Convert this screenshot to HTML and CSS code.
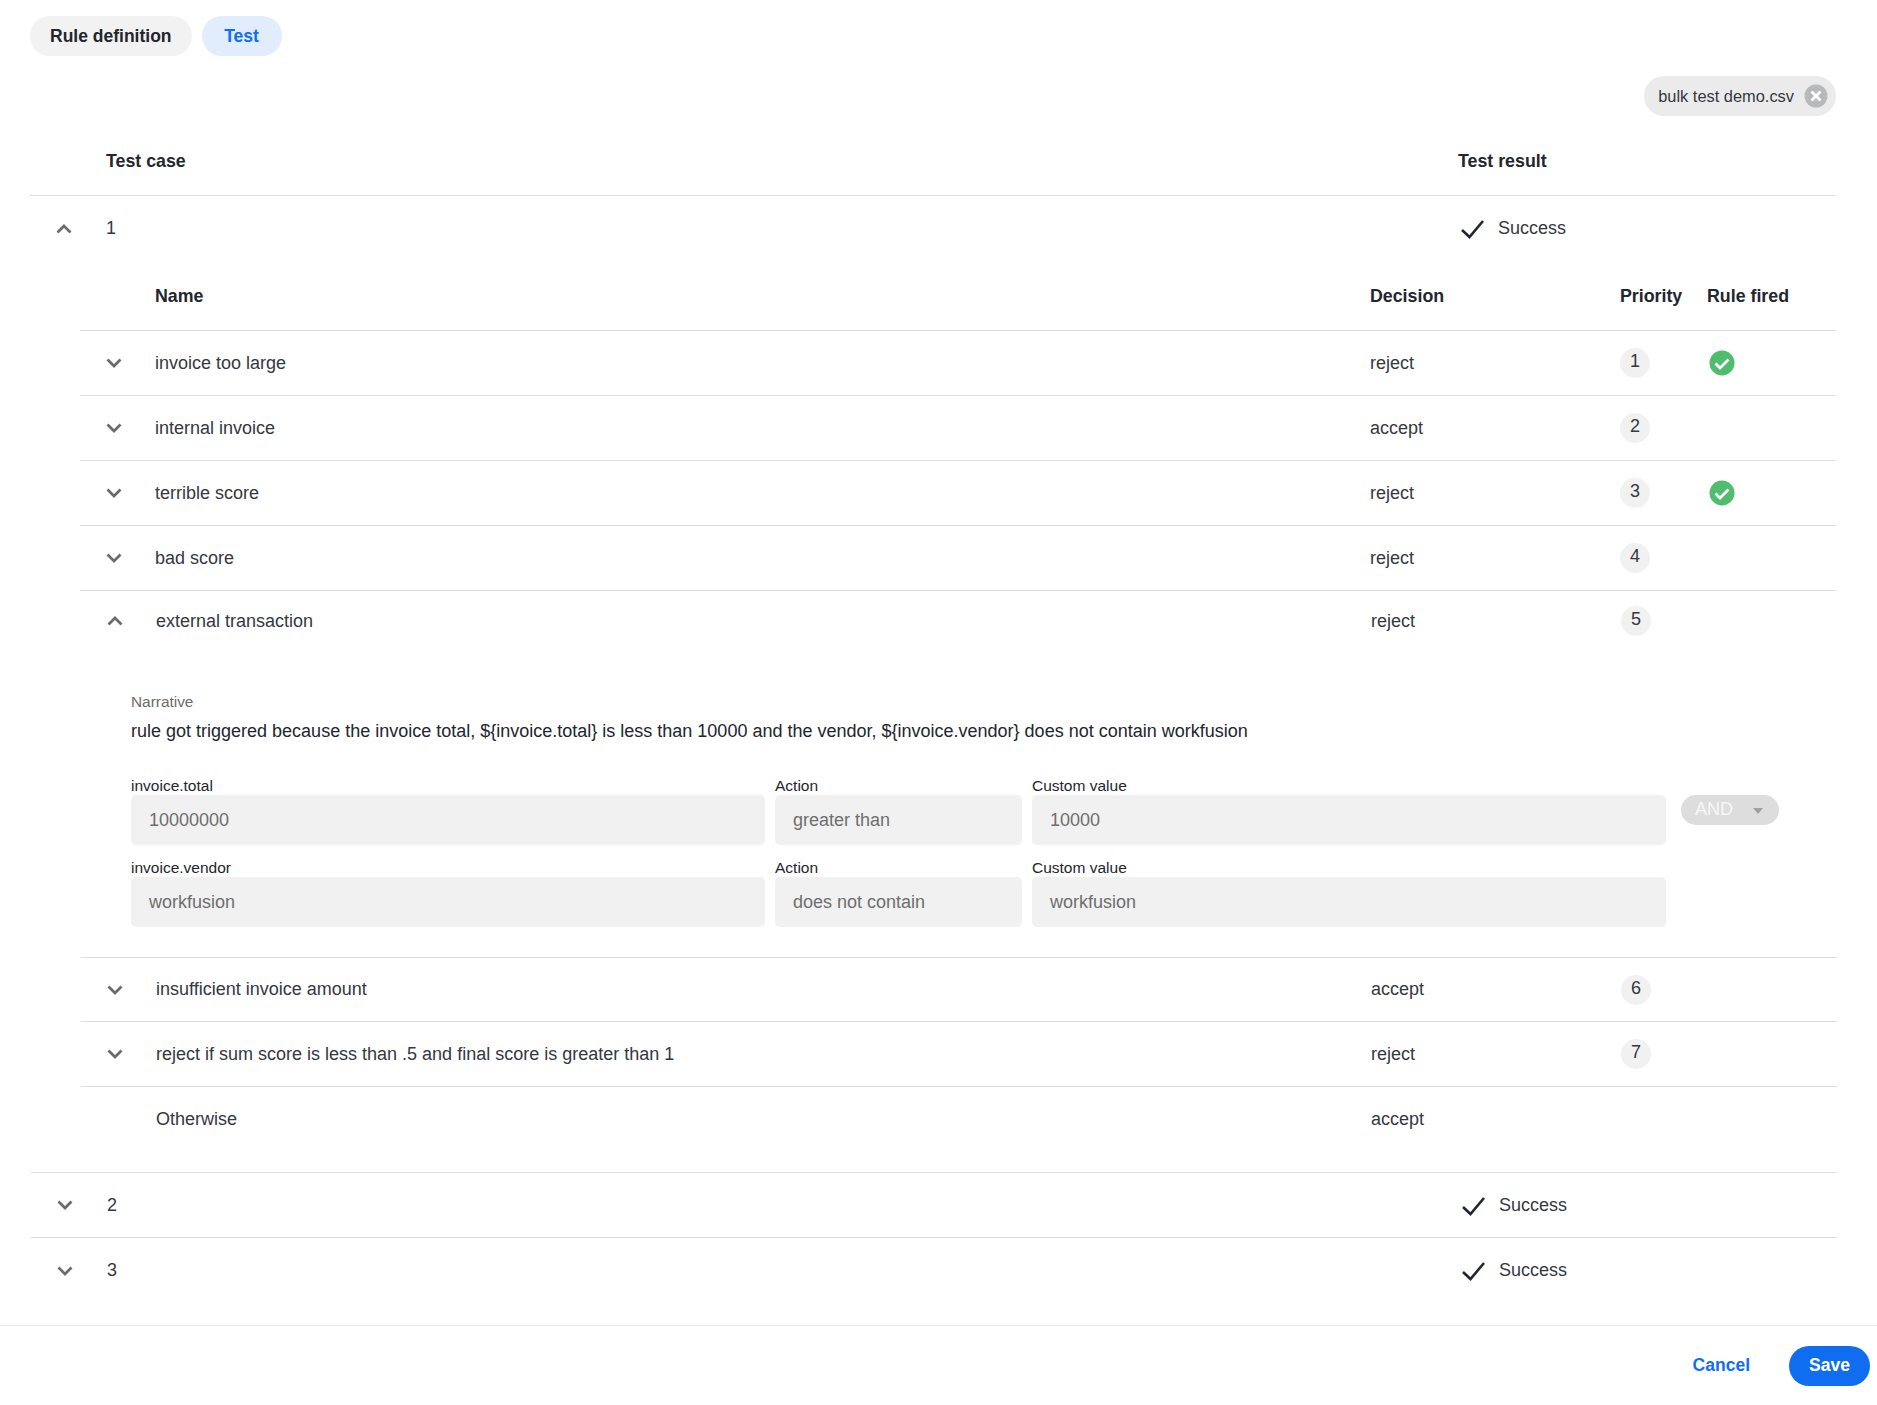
FILE: index.html
```html
<!DOCTYPE html>
<html lang="en">
<head>
    <meta charset="UTF-8">
    <meta name="viewport" content="width=device-width, initial-scale=1.0">
    <title>Rule test</title>
    <link rel="stylesheet" href="styles.css">
</head>
<body>
    <svg class="icon-defs" width="0" height="0">
        <symbol id="chevron-down" viewBox="0 0 16 10"><path d="M1.5 1.5 8 8l6.5-6.5" fill="none" stroke="currentColor" stroke-width="2.7"/></symbol>
        <symbol id="chevron-up" viewBox="0 0 16 10"><path d="M1.5 8.5 8 2l6.5 6.5" fill="none" stroke="currentColor" stroke-width="2.7"/></symbol>
        <symbol id="tick" viewBox="0 0 24 20"><path d="M2 11l7.5 7L23 2" fill="none" stroke="currentColor" stroke-width="2.6"/></symbol>
        <symbol id="fired" viewBox="0 0 26 26"><circle cx="13" cy="13" r="12.5" fill="#4fbd6d"/><path d="M6.5 13.5l4.5 4.5 8.5-8.5" fill="none" stroke="#fff" stroke-width="2.8"/></symbol>
    </svg>

    <div class="tabs">
        <button class="tab">Rule definition</button>
        <button class="tab tab-active">Test</button>
    </div>

    <div class="file-row">
        <div class="file-chip">
            <span>bulk test demo.csv</span>
            <svg class="chip-close" viewBox="0 0 24 24"><circle cx="12" cy="12" r="11.5" fill="#b8b9bb"/><path d="M7.5 7.5l9 9m0-9l-9 9" stroke="#fff" stroke-width="2.8"/></svg>
        </div>
    </div>

    <div class="cases">
        <div class="case-row case-head">
            <div class="case-toggle"></div>
            <div class="case-name">Test case</div>
            <div class="case-result">Test result</div>
        </div>

        <div class="case-open">
            <div class="case-row case-row-plain">
                <div class="case-toggle"><svg class="chevron"><use href="#chevron-up"/></svg></div>
                <div class="case-name">1</div>
                <div class="case-result"><svg class="tick"><use href="#tick"/></svg>Success</div>
            </div>

            <div class="rules">
                <div class="rule-row rule-head">
                    <div class="rule-toggle"></div>
                    <div class="rule-name">Name</div>
                    <div class="rule-decision">Decision</div>
                    <div class="rule-priority">Priority</div>
                    <div class="rule-fired">Rule fired</div>
                </div>
                <div class="rule-row">
                    <div class="rule-toggle"><svg class="chevron"><use href="#chevron-down"/></svg></div>
                    <div class="rule-name">invoice too large</div>
                    <div class="rule-decision">reject</div>
                    <div class="rule-priority"><span class="badge">1</span></div>
                    <div class="rule-fired"><svg class="fired"><use href="#fired"/></svg></div>
                </div>
                <div class="rule-row">
                    <div class="rule-toggle"><svg class="chevron"><use href="#chevron-down"/></svg></div>
                    <div class="rule-name">internal invoice</div>
                    <div class="rule-decision">accept</div>
                    <div class="rule-priority"><span class="badge">2</span></div>
                    <div class="rule-fired"></div>
                </div>
                <div class="rule-row">
                    <div class="rule-toggle"><svg class="chevron"><use href="#chevron-down"/></svg></div>
                    <div class="rule-name">terrible score</div>
                    <div class="rule-decision">reject</div>
                    <div class="rule-priority"><span class="badge">3</span></div>
                    <div class="rule-fired"><svg class="fired"><use href="#fired"/></svg></div>
                </div>
                <div class="rule-row">
                    <div class="rule-toggle"><svg class="chevron"><use href="#chevron-down"/></svg></div>
                    <div class="rule-name">bad score</div>
                    <div class="rule-decision">reject</div>
                    <div class="rule-priority"><span class="badge">4</span></div>
                    <div class="rule-fired"></div>
                </div>

                <div class="nudged">
                    <div class="rule-open">
                        <div class="rule-row rule-row-top">
                            <div class="rule-toggle"><svg class="chevron"><use href="#chevron-up"/></svg></div>
                            <div class="rule-name">external transaction</div>
                            <div class="rule-decision">reject</div>
                            <div class="rule-priority"><span class="badge">5</span></div>
                            <div class="rule-fired"></div>
                        </div>
                        <div class="rule-detail">
                            <div class="narrative-label">Narrative</div>
                            <div class="narrative">rule got triggered because the invoice total, ${invoice.total} is less than 10000 and the vendor, ${invoice.vendor} does not contain workfusion</div>
                            <div class="conditions">
                                <div class="field">
                                    <label>invoice.total</label>
                                    <div class="field-value">10000000</div>
                                </div>
                                <div class="field">
                                    <label>Action</label>
                                    <div class="field-value">greater than</div>
                                </div>
                                <div class="field">
                                    <label>Custom value</label>
                                    <div class="field-value">10000</div>
                                </div>
                                <div class="joiner"><span>AND</span><i class="joiner-arrow"></i></div>
                                <div class="field">
                                    <label>invoice.vendor</label>
                                    <div class="field-value">workfusion</div>
                                </div>
                                <div class="field">
                                    <label>Action</label>
                                    <div class="field-value">does not contain</div>
                                </div>
                                <div class="field">
                                    <label>Custom value</label>
                                    <div class="field-value">workfusion</div>
                                </div>
                            </div>
                        </div>
                    </div>
                    <div class="rule-row rule-after-open">
                        <div class="rule-toggle"><svg class="chevron"><use href="#chevron-down"/></svg></div>
                        <div class="rule-name">insufficient invoice amount</div>
                        <div class="rule-decision">accept</div>
                        <div class="rule-priority"><span class="badge">6</span></div>
                        <div class="rule-fired"></div>
                    </div>
                    <div class="rule-row">
                        <div class="rule-toggle"><svg class="chevron"><use href="#chevron-down"/></svg></div>
                        <div class="rule-name">reject if sum score is less than .5 and final score is greater than 1</div>
                        <div class="rule-decision">reject</div>
                        <div class="rule-priority"><span class="badge">7</span></div>
                        <div class="rule-fired"></div>
                    </div>
                    <div class="rule-row rule-last">
                        <div class="rule-toggle"></div>
                        <div class="rule-name">Otherwise</div>
                        <div class="rule-decision">accept</div>
                        <div class="rule-priority"></div>
                        <div class="rule-fired"></div>
                    </div>
                </div>
            </div>
        </div>

        <div class="nudged case-line">
            <div class="case-row">
                <div class="case-toggle"><svg class="chevron"><use href="#chevron-down"/></svg></div>
                <div class="case-name">2</div>
                <div class="case-result"><svg class="tick"><use href="#tick"/></svg>Success</div>
            </div>
            <div class="case-row case-row-plain">
                <div class="case-toggle"><svg class="chevron"><use href="#chevron-down"/></svg></div>
                <div class="case-name">3</div>
                <div class="case-result"><svg class="tick"><use href="#tick"/></svg>Success</div>
            </div>
        </div>
    </div>

    <div class="footer">
        <button class="btn-cancel">Cancel</button>
        <button class="btn-save">Save</button>
    </div>
</body>
</html>
```

FILE: styles.css
```css
* {
    box-sizing: border-box;
}
body {
    margin: 0;
    font-family: "Liberation Sans", Arial, sans-serif;
    font-size: 18px;
    color: #34383f;
    background-color: #fff;
}
button {
    font-family: inherit;
    border: none;
    cursor: pointer;
}
.icon-defs {
    position: absolute;
}
.tabs {
    display: flex;
    gap: 10px;
    padding: 16px 30px 0;
}
.tab {
    height: 40px;
    padding: 0 20px;
    border-radius: 20px;
    font-size: 17.5px;
    font-weight: bold;
    color: #22262e;
    background-color: #f2f2f2;
}
.tab-active {
    width: 80px;
    padding: 0;
    color: #0f6ef5;
    background-color: #e1ecfd;
}
.file-row {
    display: flex;
    justify-content: flex-end;
    padding: 20px 41px 0 0;
}
.file-chip {
    display: flex;
    align-items: center;
    height: 40px;
    padding: 0 8px 0 14px;
    border-radius: 20px;
    font-size: 16.4px;
    background-color: #ebebeb;
}
.chip-close {
    width: 24px;
    height: 24px;
    margin-left: 10px;
}
.cases {
    padding: 0 41px 0 30px;
}
.case-row {
    display: flex;
    align-items: center;
    height: 65px;
    border-bottom: 1px solid #dedede;
}
.case-row-plain {
    border-bottom: none;
}
.case-head {
    height: 80px;
    padding-top: 11px;
    font-size: 17.8px;
    font-weight: bold;
    color: #22262e;
}
.case-toggle {
    display: flex;
    align-items: center;
    width: 76px;
    padding-left: 26px;
}
.case-name {
    flex: 1;
}
.case-result {
    display: flex;
    align-items: center;
    width: 378px;
}
.chevron {
    width: 16px;
    height: 10px;
    color: #6b6b6b;
}
.tick {
    width: 24px;
    height: 20px;
    margin: 1px 14px 0 2px;
    color: #22262e;
}
.rules {
    margin-left: 50px;
}
.rule-row {
    display: flex;
    align-items: center;
    height: 65px;
    border-bottom: 1px solid #dedede;
}
.rule-head {
    height: 70px;
    padding-top: 1px;
    font-size: 17.8px;
    font-weight: bold;
    color: #22262e;
}
.rule-toggle {
    display: flex;
    align-items: center;
    width: 75px;
    padding-left: 26px;
}
.rule-name {
    flex: 1;
}
.rule-decision {
    width: 250px;
}
.rule-priority {
    width: 87px;
}
.rule-fired {
    display: flex;
    align-items: center;
    width: 129px;
}
.badge {
    display: block;
    width: 30px;
    height: 30px;
    padding-top: 1px;
    border-radius: 50%;
    line-height: 24px;
    text-align: center;
    background-color: #f1f1f1;
}
.fired {
    width: 26px;
    height: 26px;
    margin-left: 2px;
}
.nudged {
    margin: 0 -1px 0 1px;
}
.rule-open {
    border-bottom: 1px solid #dedede;
}
.rule-row-top {
    height: 60px;
    border-bottom: none;
}
.rule-detail {
    padding: 43px 47px 30px 50px;
}
.narrative-label {
    font-size: 15.4px;
    line-height: 16px;
    color: #6b6b6b;
}
.narrative {
    margin-top: 11px;
    line-height: 20px;
    color: #22262e;
}
.conditions {
    display: grid;
    grid-template-columns: 634px 247px 634px 98px;
    column-gap: 10px;
    row-gap: 15px;
    margin-top: 37px;
}
.field label {
    display: block;
    margin-bottom: 2px;
    font-size: 15.5px;
    line-height: 15px;
    color: #22262e;
}
.field-value {
    height: 50px;
    padding: 0 18px;
    border-radius: 5px;
    line-height: 50px;
    color: #6e6e6e;
    background-color: #f1f1f1;
}
.joiner {
    display: flex;
    align-items: center;
    justify-content: space-between;
    align-self: start;
    width: 98px;
    height: 30px;
    margin: 17px 0 0 5px;
    padding: 0 16px 2px 14px;
    border-radius: 15px;
    color: #f7f7f7;
    background-color: #dddddd;
}
.joiner-arrow {
    width: 0;
    height: 0;
    margin-top: 3px;
    border-left: 5px solid transparent;
    border-right: 5px solid transparent;
    border-top: 6px solid #a0a0a0;
}
.rule-after-open {
    height: 64px;
}
.rule-last {
    height: 85px;
    padding-bottom: 21px;
    border-bottom: none;
}
.case-line {
    border-top: 1px solid #dedede;
}
.footer {
    display: flex;
    align-items: center;
    justify-content: flex-end;
    gap: 39px;
    height: 80px;
    margin-top: 22px;
    padding: 0 7px 0 0;
    border-top: 1px solid #e6e6e6;
}
.btn-cancel {
    padding: 0;
    font-size: 17.5px;
    font-weight: bold;
    color: #0f6ef5;
    background: none;
}
.btn-save {
    width: 81px;
    height: 40px;
    border-radius: 20px;
    font-size: 17.5px;
    font-weight: bold;
    color: #fff;
    background-color: #0f6ef0;
}
```
